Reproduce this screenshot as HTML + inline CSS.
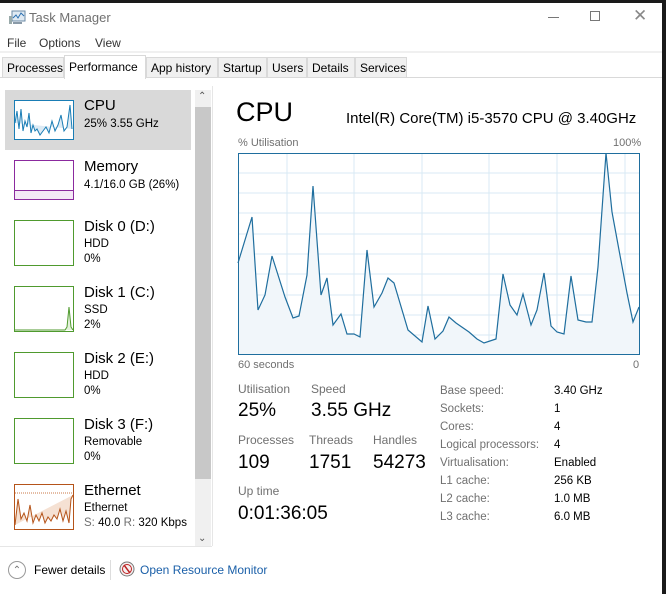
<!DOCTYPE html>
<html><head><meta charset="utf-8"><style>
*{margin:0;padding:0;box-sizing:border-box}
body{width:666px;height:594px;background:#fff;font-family:"Liberation Sans",sans-serif;position:relative;overflow:hidden;color:#000}
.a{position:absolute;white-space:nowrap}
.g{color:#707070}
.thumb{position:absolute;left:14px;width:60px;border:1px solid}
.t1{font-size:15px}
.t2{font-size:11.5px;line-height:16px}
.tab{position:absolute;top:57px;height:21px;border:1px solid #d9d9d9;background:#f0f0f0;font-size:12px;padding:3px 4px 0}
</style></head><body>
<div class="a" style="left:0;top:0;width:666px;height:3px;background:#1a1a1a"></div>
<div class="a" style="left:662px;top:0;width:4px;height:594px;background:#1a1a1a"></div>
<!-- title -->
<svg class="a" style="left:8px;top:10px" width="18" height="16" viewBox="0 0 18 16"><rect x="4" y="1" width="13" height="10" fill="#dfe9f2" stroke="#6b8aa6"/><polyline points="5,8 8,5 10,8 13,3 16,6" fill="none" stroke="#2a6fb0"/><rect x="1" y="6" width="3" height="8" fill="#9aa"/><rect x="5" y="12" width="9" height="2" fill="#8a9aa8"/></svg>
<div class="a g" style="left:29px;top:10px;font-size:13px">Task Manager</div>
<div class="a" style="left:548px;top:17px;width:11px;height:1px;background:#777"></div>
<div class="a" style="left:590px;top:11px;width:10px;height:10px;border:1px solid #777"></div>
<div class="a g" style="left:633px;top:6px;font-size:17px;color:#888">✕</div>
<div class="a" style="left:7px;top:36px;font-size:12px;color:#333">File</div>
<div class="a" style="left:39px;top:36px;font-size:12px;color:#333">Options</div>
<div class="a" style="left:95px;top:36px;font-size:12px;color:#333">View</div>
<div class="a" style="left:0;top:51px;width:662px;height:2px;background:#f0f0f0"></div>
<!-- tabs -->
<div class="tab" style="left:2px;width:62px">Processes</div>
<div class="tab" style="left:64px;top:55px;height:24px;width:82px;background:#fff;border-bottom:none;padding-top:4px">Performance</div>
<div class="tab" style="left:146px;width:72px">App history</div>
<div class="tab" style="left:218px;width:49px">Startup</div>
<div class="tab" style="left:267px;width:40px">Users</div>
<div class="tab" style="left:307px;width:48px">Details</div>
<div class="tab" style="left:355px;width:52px">Services</div>
<div class="a" style="left:0;top:77px;width:64px;height:1px;background:#d9d9d9"></div>
<div class="a" style="left:146px;top:77px;width:516px;height:1px;background:#d9d9d9"></div>
<!-- sidebar -->
<div class="a" style="left:5px;top:90px;width:186px;height:60px;background:#d9d9d9"></div>
<div class="a" style="left:195px;top:90px;width:16px;height:456px;background:#f0f0f0"></div>
<div class="a" style="left:195px;top:107px;width:16px;height:372px;background:#c8c8c8"></div>
<div class="a" style="left:198px;top:91px;font-size:10px;color:#555">&#8963;</div>
<div class="a" style="left:198px;top:533px;font-size:10px;color:#555">&#8964;</div>
<div class="a" style="left:212px;top:86px;width:1px;height:460px;background:#e6e6e6"></div>
<div class="a" style="left:0;top:546px;width:212px;height:1px;background:#e6e6e6"></div>

<div class="thumb" style="top:100px;height:40px;border-color:#1a7db5;background:#fff">
<svg width="58" height="38"><polyline points="0,22 2,10 4,28 6,8 8,30 10,20 12,26 14,12 16,32 18,24 20,30 22,28 25,34 28,30 31,26 34,32 37,20 40,30 43,24 46,14 49,30 52,26 55,4 57,28" fill="#dceaf4" stroke="#1a7db5" stroke-width="1"/></svg></div>
<div class="a t1" style="left:84px;top:97px">CPU</div>
<div class="a t2" style="left:84px;top:116px">25% 3.55 GHz</div>

<div class="thumb" style="top:160px;height:40px;border-color:#8b2a9e"><div style="position:absolute;left:0;right:0;bottom:0;height:9px;background:#f4e8f6;border-top:1px solid #8b2a9e"></div></div>
<div class="a t1" style="left:84px;top:158px">Memory</div>
<div class="a t2" style="left:84px;top:177px">4.1/16.0 GB (26%)</div>

<div class="thumb" style="top:220px;height:46px;border-color:#4f9a2e"></div>
<div class="a t1" style="left:84px;top:218px">Disk 0 (D:)</div>
<div class="a t2" style="left:84px;top:236px">HDD</div>
<div class="a t2" style="left:84px;top:251px">0%</div>

<div class="thumb" style="top:286px;height:46px;border-color:#4f9a2e"><svg width="58" height="44"><polyline points="0,43 50,43 52,40 54,20 56,40 58,43" fill="#e3f1da" stroke="#4f9a2e"/></svg></div>
<div class="a t1" style="left:84px;top:284px">Disk 1 (C:)</div>
<div class="a t2" style="left:84px;top:302px">SSD</div>
<div class="a t2" style="left:84px;top:317px">2%</div>

<div class="thumb" style="top:352px;height:46px;border-color:#4f9a2e"></div>
<div class="a t1" style="left:84px;top:350px">Disk 2 (E:)</div>
<div class="a t2" style="left:84px;top:368px">HDD</div>
<div class="a t2" style="left:84px;top:383px">0%</div>

<div class="thumb" style="top:418px;height:46px;border-color:#4f9a2e"></div>
<div class="a t1" style="left:84px;top:416px">Disk 3 (F:)</div>
<div class="a t2" style="left:84px;top:434px">Removable</div>
<div class="a t2" style="left:84px;top:449px">0%</div>

<div class="thumb" style="top:484px;height:46px;border-color:#b5541a"><svg width="58" height="44"><polyline points="0,40 3,14 6,34 9,28 12,36 15,20 18,38 21,30 24,36 27,28 30,38 33,32 36,36 39,30 42,34 45,24 48,36 51,26 54,38 56,14 58,10" fill="#f5e1d3" stroke="#b5541a"/><line x1="0" y1="8" x2="58" y2="8" stroke="#c87a48" stroke-dasharray="1,1"/></svg></div>
<div class="a t1" style="left:84px;top:482px">Ethernet</div>
<div class="a t2" style="left:84px;top:500px">Ethernet</div>
<div class="a t2" style="left:84px;top:515px"><span class="g">S:</span> 40.0 <span class="g">R:</span> 320 Kbps</div>

<!-- main -->
<div class="a" style="left:236px;top:97px;font-size:27px">CPU</div>
<div class="a" style="left:346px;top:110px;font-size:15px">Intel(R) Core(TM) i5-3570 CPU @ 3.40GHz</div>
<div class="a g" style="left:238px;top:137px;font-size:11px">% Utilisation</div>
<div class="a g" style="left:613px;top:137px;font-size:11px">100%</div>
<svg class="a" style="left:237px;top:152px" width="405" height="204" viewBox="237 152 405 204">
<rect x="238" y="153" width="402" height="202" fill="#fff"/>
<g stroke="#d9eaf4" stroke-width="1">
<line x1="287" y1="153" x2="287" y2="355"/><line x1="354" y1="153" x2="354" y2="355"/><line x1="422" y1="153" x2="422" y2="355"/><line x1="489" y1="153" x2="489" y2="355"/><line x1="557" y1="153" x2="557" y2="355"/><line x1="625" y1="153" x2="625" y2="355"/>
<line x1="238" y1="173" x2="640" y2="173"/><line x1="238" y1="193" x2="640" y2="193"/><line x1="238" y1="213" x2="640" y2="213"/><line x1="238" y1="234" x2="640" y2="234"/><line x1="238" y1="254" x2="640" y2="254"/><line x1="238" y1="274" x2="640" y2="274"/><line x1="238" y1="295" x2="640" y2="295"/><line x1="238" y1="315" x2="640" y2="315"/><line x1="238" y1="335" x2="640" y2="335"/>
</g>
<polygon points="238,355 238,263 252,217 258,310 265,295 272,256 285,297 293,318 299,316 307,275 313,186 321,295 327,278 333,325 341,314 347,334 354,334 360,337 367,250 374,307 382,293 388,278 394,283 408,330 422,342 428,306 435,339 443,331 449,317 456,323 469,332 477,339 484,343 496,339 503,274 510,305 517,315 523,294 531,325 537,310 544,273 551,326 557,332 564,334 571,276 578,320 586,322 592,322 598,267 606,153 612,212 619,250 627,293 633,322 639,307 640,355" fill="#f1f6fa"/>
<polyline points="238,263 252,217 258,310 265,295 272,256 285,297 293,318 299,316 307,275 313,186 321,295 327,278 333,325 341,314 347,334 354,334 360,337 367,250 374,307 382,293 388,278 394,283 408,330 422,342 428,306 435,339 443,331 449,317 456,323 469,332 477,339 484,343 496,339 503,274 510,305 517,315 523,294 531,325 537,310 544,273 551,326 557,332 564,334 571,276 578,320 586,322 592,322 598,267 606,153 612,212 619,250 627,293 633,322 639,307" fill="none" stroke="#1f6e9e" stroke-width="1.2"/>
<rect x="238.5" y="153.5" width="401" height="201" fill="none" stroke="#1f6e9e"/>
</svg>
<div class="a g" style="left:238px;top:359px;font-size:11px">60 seconds</div>
<div class="a g" style="left:633px;top:359px;font-size:11px">0</div>

<div class="a g" style="left:238px;top:382px;font-size:12px">Utilisation</div>
<div class="a g" style="left:311px;top:382px;font-size:12px">Speed</div>
<div class="a" style="left:238px;top:400px;font-size:19px">25%</div>
<div class="a" style="left:311px;top:400px;font-size:19px">3.55 GHz</div>
<div class="a g" style="left:238px;top:433px;font-size:12px">Processes</div>
<div class="a g" style="left:309px;top:433px;font-size:12px">Threads</div>
<div class="a g" style="left:373px;top:433px;font-size:12px">Handles</div>
<div class="a" style="left:238px;top:452px;font-size:19px">109</div>
<div class="a" style="left:309px;top:452px;font-size:19px">1751</div>
<div class="a" style="left:373px;top:452px;font-size:19px">54273</div>
<div class="a g" style="left:238px;top:484px;font-size:12px">Up time</div>
<div class="a" style="left:238px;top:503px;font-size:19px">0:01:36:05</div>

<div class="a g" style="left:440px;top:382px;font-size:11.5px;line-height:18px">Base speed:<br>Sockets:<br>Cores:<br>Logical processors:<br>Virtualisation:<br>L1 cache:<br>L2 cache:<br>L3 cache:</div>
<div class="a" style="left:554px;top:382px;font-size:11.5px;line-height:18px">3.40 GHz<br>1<br>4<br>4<br>Enabled<br>256 KB<br>1.0 MB<br>6.0 MB</div>

<!-- footer -->
<div class="a" style="left:8px;top:561px;width:18px;height:18px;border:1px solid #999;border-radius:50%;font-size:10px;color:#777;text-align:center;line-height:17px">&#8963;</div>
<div class="a" style="left:34px;top:563px;font-size:12px">Fewer details</div>
<div class="a" style="left:110px;top:560px;width:1px;height:20px;background:#ddd"></div>
<svg class="a" style="left:119px;top:561px" width="16" height="16"><circle cx="8" cy="8" r="7" fill="#f6f0f0" stroke="#777"/><circle cx="8" cy="8" r="4.5" fill="none" stroke="#b22"/><line x1="5" y1="4" x2="11" y2="12" stroke="#b22" stroke-width="1.5"/></svg>
<div class="a" style="left:140px;top:563px;font-size:12px;color:#1a5fa8">Open Resource Monitor</div>
</body></html>
